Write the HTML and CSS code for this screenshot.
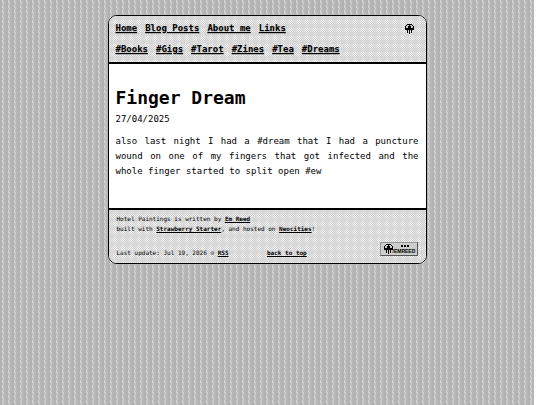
FILE: index.html
```html
<!DOCTYPE html>
<html lang="en">
<head>
    <meta charset="UTF-8">
    <meta name="viewport" content="width=device-width, initial-scale=1.0">
    <title>Finger Dream</title>
    <link rel="stylesheet" href="styles.css">
</head>
<body>

<div class="page" id="top">
    <header class="site-header">
        <nav class="nav" aria-label="Main">
            <ul class="nav-list">
                <li><a href="#">Home</a></li>
                <li><a href="#">Blog Posts</a></li>
                <li><a href="#">About me</a></li>
                <li><a href="#">Links</a></li>
            </ul>
            <ul class="nav-list">
                <li><a href="#">#Books</a></li>
                <li><a href="#">#Gigs</a></li>
                <li><a href="#">#Tarot</a></li>
                <li><a href="#">#Zines</a></li>
                <li><a href="#">#Tea</a></li>
                <li><a href="#">#Dreams</a></li>
            </ul>
        </nav>
        <svg class="logo" viewBox="0 0 9 10" shape-rendering="crispEdges" aria-hidden="true">
            <path d="M2 0h5v1h1v1h1v4H0V2h1V1h1z" fill="#000"/>
            <path d="M2 1h2v1H2zM1 2h2v2H1zM5 1h2v1H5zM6 2h2v2H6z" fill="#ccc"/>
            <path d="M2 6h1v3H2zM4 6h1v4H4zM6 6h1v3H6z" fill="#000"/>
        </svg>
    </header>

    <main class="post">
        <h1>Finger Dream</h1>
        <time class="post-date" datetime="2025-04-27">27/04/2025</time>
        <p>also last night I had a #dream that I had a puncture wound on one of my fingers that got infected and the whole finger started to split open #ew</p>
    </main>

    <footer class="site-footer">
        <p>Hotel Paintings is written by <a href="#">Em Reed</a><br>
        built with <a href="#">Strawberry Starter</a>, and hosted on <a href="#">Neocities</a>!</p>
        <div class="footer-row">
            <span>Last update: Jul 19, 2026 ⊙ <a href="#">RSS</a></span>
            <div class="footer-links">
                <a href="#top">back to top</a>
                <a class="badge" href="#" aria-label="Em Reed">
                    <svg class="badge-icon" viewBox="0 0 9 10" shape-rendering="crispEdges" aria-hidden="true">
                        <path d="M2 0h5v1h1v1h1v4H0V2h1V1h1z" fill="#000"/>
                        <path d="M2 1h2v1H2zM1 2h2v2H1zM5 1h2v1H5zM6 2h2v2H6z" fill="#ccc"/>
                        <path d="M2 6h1v3H2zM4 6h1v4H4zM6 6h1v3H6z" fill="#000"/>
                    </svg>
                    <span class="badge-text"><span class="badge-dots"></span>/EMREED</span>
                </a>
            </div>
        </div>
    </footer>
</div>

</body>
</html>
```

FILE: styles.css
```css
html {
    background: #fff;
}

body {
    box-sizing: border-box;
    min-height: 100vh;
    margin: 0 6px 0 0;
    padding: 15px 8px;
    /* dithered stripes */
    background:
        conic-gradient(from 0deg at 1px 3px, transparent 75%, #d4d4d4 0) 2px 0 / 6px 5px,
        conic-gradient(from 0deg at 1px 3px, transparent 75%, #cccccc 0) 3px 2px / 6px 5px,
        repeating-linear-gradient(90deg, #b2b2b2 0 2px, #bcbcbc 2px 4px, #b6b6b6 4px 6px);
    color: #000;
    font-family: "DejaVu Sans Mono", monospace;
    font-size: 9px;
}

a {
    color: #000;
    font-weight: bold;
}

.page {
    box-sizing: border-box;
    max-width: 319px;
    margin: 0 auto;
    border: 1px solid #000;
    border-radius: 9px;
    background: #fff;
    overflow: hidden;
}

.site-header,
.site-footer {
    /* checkerboard */
    background:
        linear-gradient(90deg, rgba(210, 210, 210, 0.5) 50%, transparent 0) 0 0 / 8px 8px,
        linear-gradient(rgba(210, 210, 210, 0.5) 50%, transparent 0) 0 0 / 8px 8px,
        repeating-conic-gradient(#cacaca 0 25%, #fff 0 50%) 0 0 / 2px 2px;
}

.site-header {
    display: flex;
    justify-content: space-between;
    align-items: flex-start;
    padding: 2px 12px 2px 7px;
    border-bottom: 2px solid #000;
}

.nav-list {
    display: flex;
    flex-wrap: wrap;
    gap: 0 8px;
    margin: 0;
    padding: 0;
    list-style: none;
    line-height: 21px;
}

.nav-list a {
    text-shadow: 0 1px 1px #aaa;
}

.logo {
    width: 9px;
    height: 10px;
    margin-top: 6px;
}

.post {
    padding: 22px 7px 29px;
}

.post h1 {
    margin: 0;
    font-size: 18px;
    line-height: 24px;
}

.post-date {
    display: block;
    line-height: 18px;
}

.post p {
    margin: 6px 0 0;
    line-height: 15px;
    text-align: justify;
}

.site-footer {
    padding: 4px 8px 5px;
    border-top: 2px solid #000;
    font-size: 6px;
    line-height: 10px;
}

.site-footer p {
    margin: 0 0 8px;
}

.footer-row {
    display: grid;
    grid-template-columns: 1fr 1fr;
    align-items: end;
}

.footer-links {
    display: flex;
    justify-content: space-between;
    align-items: flex-end;
}

.badge {
    display: flex;
    align-items: center;
    box-sizing: border-box;
    width: 38px;
    height: 14px;
    margin-bottom: 2px;
    padding: 0 1px 0 3px;
    border: 1px solid #777;
    border-color: #999 #555 #555 #999;
    background: #ccc;
    text-decoration: none;
}

.badge-icon {
    flex: none;
    width: 9px;
    height: 10px;
}

.badge-text {
    font-family: "Liberation Sans", sans-serif;
    font-size: 5px;
    line-height: 6px;
}

.badge-dots {
    display: block;
    width: 8px;
    height: 2px;
    margin: 0 0 1px 8px;
    background: repeating-linear-gradient(90deg, #000 0 2px, transparent 2px 3px);
}
```
